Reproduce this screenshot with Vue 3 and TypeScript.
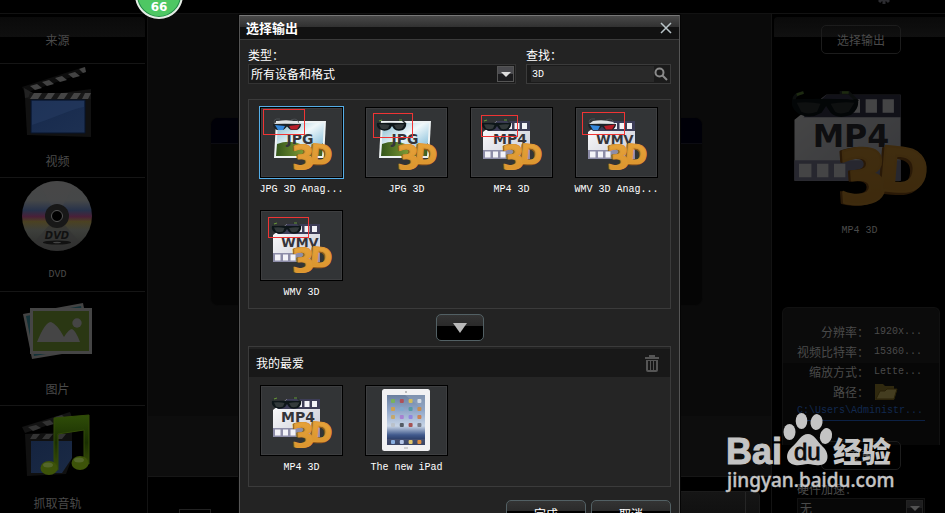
<script setup lang="ts">
import { ref } from 'vue'

type Art = 'film' | 'photo' | 'ipad'
interface Format {
  name: string
  art: Art
  text?: string
  glasses?: 'dark' | 'red'
  mark?: [number, number, number, number]
}

const sources = [
  { id: 'video', name: '视频' },
  { id: 'dvd', name: 'DVD' },
  { id: 'photos', name: '图片' },
  { id: 'audio', name: '抓取音轨' },
]

const formats: Format[] = [
  { name: 'JPG 3D Anag...', art: 'photo', text: 'JPG', glasses: 'red', mark: [3, 2, 42, 25] },
  { name: 'JPG 3D', art: 'photo', text: 'JPG', glasses: 'dark', mark: [8, 6, 40, 24] },
  { name: 'MP4 3D', art: 'film', text: 'MP4', glasses: 'dark', mark: [11, 8, 37, 21] },
  { name: 'WMV 3D Anag...', art: 'film', text: 'WMV', glasses: 'red', mark: [7, 5, 43, 22] },
  { name: 'WMV 3D', art: 'film', text: 'WMV', glasses: 'dark', mark: [8, 7, 41, 20] },
]
const favorites: Format[] = [
  { name: 'MP4 3D', art: 'film', text: 'MP4', glasses: 'dark' },
  { name: 'The new iPad', art: 'ipad' },
]

const details = [
  { label: '分辨率：', value: '1920x...' },
  { label: '视频比特率：', value: '15360...' },
  { label: '缩放方式：', value: 'Lette...' },
]

const selected = ref(0)
const query = ref('3D')
const category = ref('all')
const appColors = ['#79b84d', '#b7474a', '#e0c44c', '#dfe4ea', '#d8a03e', '#7fa9cf', '#4b9aa0', '#cf8a3e', '#c9a55a', '#a678d0', '#8d7de0', '#d0793f', '#b9bec6', '#41464e', '#a03c3a', '#6b6f7a']
</script>

<template>
  <div class="app">
    <svg class="defs" width="0" height="0" aria-hidden="true">
      <defs>
        <linearGradient id="sky" x1="0" y1="0" x2="1" y2="1">
          <stop offset="0" stop-color="#7db5cc" /><stop offset=".45" stop-color="#f0f8fa" /><stop offset="1" stop-color="#5fa9cf" />
        </linearGradient>
        <linearGradient id="grass" x1="0" y1="0" x2="1" y2="0">
          <stop offset="0" stop-color="#34561b" /><stop offset=".6" stop-color="#7f9c36" /><stop offset="1" stop-color="#3a5a22" />
        </linearGradient>
        <linearGradient id="paper" x1="0" y1="0" x2="1" y2="1">
          <stop offset="0" stop-color="#fff" /><stop offset="1" stop-color="#c6c8d4" />
        </linearGradient>
        <linearGradient id="gold" x1="0" y1="0" x2="0" y2="1">
          <stop offset="0" stop-color="#e8a53c" /><stop offset="1" stop-color="#d9922b" />
        </linearGradient>
        <linearGradient id="screen" x1="0" y1="0" x2="0" y2="1">
          <stop offset="0" stop-color="#6a7f9e" /><stop offset=".3" stop-color="#8fa5c8" /><stop offset=".62" stop-color="#c7d4e6" /><stop offset=".8" stop-color="#40598c" /><stop offset="1" stop-color="#151d3c" />
        </linearGradient>
        <linearGradient id="blue" x1="0" y1="0" x2="1" y2="1">
          <stop offset="0" stop-color="#16294c" /><stop offset="1" stop-color="#1d3052" />
        </linearGradient>
        <linearGradient id="disc" x1="0" y1="0" x2="0" y2="1">
          <stop offset="0" stop-color="#474747" /><stop offset=".28" stop-color="#454748" /><stop offset=".42" stop-color="#27324a" /><stop offset=".51" stop-color="#4a2038" /><stop offset=".58" stop-color="#4b4222" /><stop offset=".7" stop-color="#3d3f3b" /><stop offset="1" stop-color="#2b2b2b" />
        </linearGradient>
        <linearGradient id="note" x1="0" y1="0" x2="0" y2="1">
          <stop offset="0" stop-color="#2f4d08" /><stop offset=".5" stop-color="#1a2f02" /><stop offset="1" stop-color="#3d5208" />
        </linearGradient>
      </defs>

      <symbol id="film" viewBox="0 0 83 71">
        <path d="M27 14H60V52H13V25Z" fill="url(#paper)" />
        <path d="M27 14H60V24H17Z" fill="#3d3d57" />
        <path d="M13 43H60V52H13Z" fill="#8d8da8" />
        <g fill="#f3f3f8">
          <path d="M37 16h5v6h-5zM44.500 16h5v6h-5zM52 16h5v6h-5z" />
          <path d="M15 44.500h5.500v6H15zM23 44.500h5v6h-5zM30.500 44.500h5v6h-5z" />
        </g>
      </symbol>
      <symbol id="photo" viewBox="0 0 83 71">
        <path d="M16 14H66L64 51H14Z" fill="#eef3f4" />
        <path d="M18 16H64L62 49H16Z" fill="url(#sky)" />
        <path d="M17 37Q30 32 43 38T63 36L62 49H16Z" fill="url(#grass)" />
      </symbol>
      <symbol id="three-d" viewBox="0 0 83 71">
        <g font-family="DejaVu Sans" font-weight="700" stroke-linejoin="round">
          <g fill="#94591a" stroke="#94591a" stroke-width="1">
            <text x="31" y="62" font-size="33" transform="rotate(-4 42 50)">3</text>
            <text x="49" y="58" font-size="27" transform="rotate(5 60 47)">D</text>
          </g>
          <g fill="url(#gold)" stroke="#dd9a35" stroke-width="1">
            <text x="32" y="62" font-size="33" transform="rotate(-4 42 50)">3</text>
            <text x="50" y="57" font-size="27" transform="rotate(5 60 47)">D</text>
          </g>
        </g>
      </symbol>
      <symbol id="glasses-dark" viewBox="0 0 83 71">
        <path d="M13 17Q12 14 17 13M41 17L37 13H33" fill="none" stroke="#2a3330" stroke-width="1.400" />
        <path d="M14 14L17 13M34 13H37" stroke="#69963a" stroke-width="1.200" />
        <path d="M12 16Q22 15.500 41 16Q42 20 38 23Q32 25 29 22L27 19L25 22Q20 25 15 22.500Q11 20 12 16Z" fill="#0d1619" />
        <path d="M14 17.500Q20 17 24.500 18L23 21.500Q19 23 16 21.500ZM29 18Q34 17 39.500 17.500L37 21.500Q33 23 31 21.500Z" fill="#333a3b" />
      </symbol>
      <symbol id="glasses-red" viewBox="0 0 83 71">
        <path d="M15 17Q12 11 20 12M31 13Q38 10 39 17" fill="none" stroke="#4b4f52" />
        <path d="M18 14Q28 12 38 15L40 17H14Z" fill="#dfe3e4" />
        <path d="M13 17Q22 16.500 41 17Q41 21 37 23H31Q29 22 27 19.500Q25 22 23 23H17Q13 21 13 17Z" fill="#1b2328" />
        <path d="M15 18L25 19L23 23H18Z" fill="#3488dc" />
        <path d="M29 19L40 17.500L37 22.500H31Z" fill="#b81d27" />
      </symbol>
    </svg>

    <header class="topbar">
      <span class="counter">66</span>
      <svg class="gear" viewBox="0 0 14 14" aria-hidden="true">
        <circle cx="7" cy="7" r="4.500" /><path d="M5.500 0h3v14h-3zM0 5.500h14v3H0z" /><path d="M5.500 0h3v14h-3z" transform="rotate(45 7 7)" /><path d="M5.500 0h3v14h-3z" transform="rotate(-45 7 7)" />
      </svg>
    </header>

    <div class="columns">
      <nav class="sources">
        <h2>来源</h2>
        <a v-for="s in sources" :key="s.id" href="#" class="source">
          <svg viewBox="0 0 71 76" aria-hidden="true">
            <g v-if="s.id === 'video'">
              <path d="M0 21L62 1L64 6L3 27Z" fill="#0d0d0d" />
              <path d="M8 20l7-2 5 4-7 2zM20 16l7-2 5 4-7 2zM33 12l7-2 5 4-7 2zM46 8l7-2 5 4-7 2zM57 3l6-2 1 5-3 1z" fill="#434343" />
              <path d="M2 22L11 27L8 32H3Z" fill="#222" />
              <path d="M3 32L69 23V71L5 69Z" fill="#111" />
              <path d="M8 27H69V33H6Z" fill="#171717" />
              <path d="M12 27h8l-4 6H8zM26 27h7l-4 6h-7zM39 27h7l-4 6h-7zM52 27h7l-4 6h-7zM63 27h6l-3 6h-6z" fill="#454545" />
              <path d="M9 34H63V67H9Z" fill="url(#blue)" stroke="#08142b" />
              <path d="M10 59Q25 54 40 48T62 41V35H10Z" fill="#253b60" opacity=".6" />
            </g>
            <g v-else-if="s.id === 'dvd'">
              <circle cx="35" cy="36" r="35" fill="url(#disc)" />
              <path d="M35 36L18 5.400A35 35 0 0 1 52 5.400Z" fill="#484848" opacity=".5" />
              <path d="M35 36L12 62.400A35 35 0 0 0 58 62.400Z" fill="#333" opacity=".6" />
              <circle cx="35" cy="36" r="12" fill="#181818" />
              <circle cx="35" cy="36" r="5.500" fill="#000" stroke="#555" />
              <text x="35" y="59" text-anchor="middle" font-family="DejaVu Sans" font-size="10" font-weight="700" font-style="italic" fill="#111">DVD</text>
              <ellipse cx="35" cy="62.500" rx="14" ry="2" fill="#111" /><ellipse cx="35" cy="62.500" rx="4" ry=".8" fill="#444" />
            </g>
            <g v-else-if="s.id === 'photos'">
              <path d="M1 20L61 9L70 55L10 65Z" fill="#434343" />
              <path d="M4 22L59 12L67 53L12 62Z" fill="#143238" />
              <path d="M8 14H70V60H8Z" fill="#454545" />
              <path d="M11 17H67V57H11Z" fill="#2a3713" />
              <path d="M15 48Q23 28 29 28Q35 30 42 43Q47 35 50 35Q54 37 58 48Z" fill="#454545" />
              <circle cx="55" cy="29" r="4.700" fill="#454545" />
            </g>
            <g v-else>
              <path d="M0 19L48 4L50 9L3 25Z" fill="#131313" />
              <path d="M6 19l8-2 5 3-8 3zM20 14l8-2 4 4-7 2zM33 9l7-2 4 4-7 2z" fill="#333" />
              <path d="M3 26L50 24V50L44 66L5 68Z" fill="#101010" />
              <path d="M11 26h7l-4 5H8zM24 26h7l-4 5h-7zM37 26h7l-4 5h-7z" fill="#333" />
              <path d="M9 33H50V50L40 65H9Z" fill="url(#blue)" opacity=".8" />
              <path d="M32 10L67 7V56H62V22L36 26V62H32Z" fill="url(#note)" stroke="#324b08" />
              <ellipse cx="27" cy="60" rx="8.500" ry="7" fill="#3d5309" /><ellipse cx="58" cy="55" rx="8.500" ry="7" fill="#3d5309" />
              <ellipse cx="26" cy="57" rx="5" ry="2.500" fill="#53662a" /><ellipse cx="57" cy="52" rx="5" ry="2.500" fill="#53662a" />
            </g>
          </svg>
          <span :class="{ latin: s.id === 'dvd' }">{{ s.name }}</span>
        </a>
      </nav>

      <main class="center">
        <div class="workspace"><div class="stage"><div class="stage-head"></div></div></div>
        <div class="timeline"><div class="mini"></div><div class="track"></div></div>
      </main>

      <aside class="output">
        <div class="output-head"><button type="button" class="ghost">选择输出</button></div>
        <figure class="preview">
          <svg viewBox="12 11 60 54" aria-hidden="true">
            <use href="#film" width="83" height="71" />
            <text x="38" y="37" text-anchor="middle" class="art-text">MP4</text>
            <use href="#glasses-dark" width="83" height="71" /><use href="#three-d" width="83" height="71" />
          </svg>
          <figcaption class="latin">MP4 3D</figcaption>
        </figure>
        <section class="details">
          <dl>
            <template v-for="d in details" :key="d.label"><dt>{{ d.label }}</dt><dd class="latin">{{ d.value }}</dd></template>
            <dt>路径：</dt>
            <dd><svg class="folder" viewBox="0 0 24 18" aria-hidden="true"><path d="M1 1H9L11 3H20V6L23 7L20 17H1Z" fill="#30290f" /><path d="M2 16L6 8H11L13 6H23L20 16Z" fill="#443d20" stroke="#282108" /></svg></dd>
          </dl>
          <a href="#" class="path latin">C:\Users\Administr...</a>
        </section>
        <button type="button" class="ghost change">变更</button>
        <div class="accel">
          <label for="accel">硬件加速：</label>
          <div class="select dim"><select id="accel"><option>无</option></select><i class="drop"></i></div>
        </div>
      </aside>
    </div>

    <div class="dialog" role="dialog" aria-labelledby="dialog-title">
      <div class="titlebar">
        <h1 id="dialog-title">选择输出</h1>
        <button type="button" class="close" aria-label="关闭"><svg viewBox="0 0 12 12"><path d="M1 1L11 11M11 1L1 11" /></svg></button>
      </div>
      <div class="content">
        <div class="filters">
          <div class="field type">
            <label for="type">类型：</label>
            <div class="select"><select id="type" v-model="category"><option value="all">所有设备和格式</option></select><i class="drop"></i></div>
          </div>
          <div class="field find">
            <label for="find">查找：</label>
            <div class="search">
              <input id="find" v-model="query" type="text" />
              <svg viewBox="0 0 14 14" aria-hidden="true"><circle cx="5.500" cy="5.500" r="4" /><path d="M8.500 8.500L13 13" /></svg>
            </div>
          </div>
        </div>

        <div class="formats">
          <button v-for="(f, i) in formats" :key="f.name" type="button" class="card" :class="{ selected: selected === i }" @click="selected = i">
            <span class="thumb">
              <svg viewBox="0 0 83 71" aria-hidden="true">
                <use :href="'#' + f.art" width="83" height="71" />
                <text x="40" y="37" text-anchor="middle" class="art-text" :class="{ wide: f.text === 'WMV' }">{{ f.text }}</text>
                <use :href="'#glasses-' + f.glasses" width="83" height="71" /><use href="#three-d" width="83" height="71" />
                <rect v-if="f.mark" :x="f.mark[0] + 0.5" :y="f.mark[1] + 0.5" :width="f.mark[2] - 1" :height="f.mark[3]" fill="none" class="mark" />
              </svg>
            </span>
            <span class="name latin">{{ f.name }}</span>
          </button>
        </div>

        <button type="button" class="glossy add" aria-label="添加"><svg viewBox="0 0 14 10"><path d="M0 0H14L7 10Z" /></svg></button>

        <section class="favorites">
          <div class="fav-head">
            <h2>我的最爱</h2>
            <button type="button" class="trash" aria-label="删除"><svg viewBox="0 0 14 17"><path d="M4 0H10V2H14V4H0V2H4ZM1 5H13V15Q13 17 11 17H3Q1 17 1 15ZM3 6V15H5V6ZM6 6V15H8V6ZM9 6V15H11V6Z" fill-rule="evenodd" /></svg></button>
          </div>
          <div class="fav-list">
            <button v-for="f in favorites" :key="f.name" type="button" class="card">
              <span class="thumb">
                <svg viewBox="0 0 83 71" aria-hidden="true">
                  <g v-if="f.art === 'ipad'">
                    <rect x="17" y="4" width="48" height="62" rx="2.500" fill="#f1f1f3" />
                    <rect x="22" y="10" width="38" height="50" fill="url(#screen)" />
                    <path d="M40 10H60V26Z" fill="#93a6c0" opacity=".5" />
                    <rect v-for="(c, n) in appColors" :key="n" :x="26 + (n % 4) * 8.800" :y="14 + Math.floor(n / 4) * 8" width="4" height="4" rx="1" :fill="c" opacity=".85" />
                    <path d="M22 54H60V60H22Z" fill="#4b5675" opacity=".7" />
                    <rect v-for="n in 4" :key="'d' + n" :x="17.200 + n * 8.800" y="55" width="4" height="4" rx="1" :fill="['#88aee0', '#b5c6e6', '#e0c56c', '#dd8d3d'][n - 1]" />
                    <circle cx="41" cy="7" r=".8" fill="#777" /><path d="M39 63H43" stroke="#aaa" />
                  </g>
                  <template v-else>
                    <use href="#film" width="83" height="71" /><text x="38" y="37" text-anchor="middle" class="art-text">{{ f.text }}</text>
                    <use href="#glasses-dark" width="83" height="71" /><use href="#three-d" width="83" height="71" />
                  </template>
                </svg>
              </span>
              <span class="name latin">{{ f.name }}</span>
            </button>
          </div>
        </section>

        <div class="actions">
          <button type="button" class="glossy">完成</button>
          <button type="button" class="glossy">取消</button>
        </div>
      </div>
    </div>

    <svg class="brand" viewBox="0 0 180 100" role="img" aria-label="Baidu 经验">
      <g fill="#c4c4c4">
        <text x="6" y="59" font-family="Liberation Sans" font-weight="700" font-size="36" stroke="#c4c4c4" stroke-width="1">Bai</text>
        <ellipse cx="69.500" cy="27" rx="6" ry="8" /><ellipse cx="81.500" cy="16" rx="5.800" ry="8" /><ellipse cx="96.500" cy="17" rx="6" ry="8" transform="rotate(8 96 17)" /><ellipse cx="106" cy="31" rx="6" ry="8" transform="rotate(14 106 31)" />
        <path d="M88 29C94 29 97 36 103 42C109 47 110 59 100 60C95 61 93 59 88 59C83 59 80 61 75 60C65 58 65 48 72 42C79 36 81 29 88 29Z" />
        <text x="113" y="58" font-family="Noto Sans CJK SC" font-weight="900" font-size="29">经验</text>
        <text x="7" y="82" font-family="Noto Sans" font-size="19" font-weight="500" stroke="#c4c4c4" stroke-width=".4">jingyan.baidu.com</text>
      </g>
      <text x="74" y="55" font-family="Liberation Sans" font-size="24" fill="#0a0a0a" stroke="#0a0a0a" stroke-width=".8">du</text>
    </svg>
  </div>
</template>

<style>
body { background: #000; overflow: hidden; }
</style>

<style scoped>
* { box-sizing: border-box; }
.app { position: relative; display: flex; flex-direction: column; height: 100vh; overflow: hidden; background: #000; color: #4a4a4a; font: 12px/18px "Noto Sans CJK SC", sans-serif; }
h1, h2, figure, dl, dd { margin: 0; font-weight: 400; font-size: 12px; }
button, input, select { font: inherit; color: inherit; margin: 0; padding: 0; border: 0; background: none; }
a { color: inherit; text-decoration: none; }
svg { display: block; flex: none; }
.defs { position: absolute; }
.latin { font-family: "Liberation Mono", monospace; font-size: 10px; white-space: nowrap; }
.art-text { font: 700 14px "DejaVu Sans", sans-serif; fill: #35353a; }
.art-text.wide { font-size: 13px; }

.topbar { flex: none; height: 14px; border-bottom: 1px solid #121212; }
.counter { position: absolute; left: 135px; top: -29px; width: 48px; height: 48px; padding-top: 26px; border: 2px solid #e5ebe5; border-radius: 50%; background: #4ec763; box-shadow: inset 0 0 0 1px #23884a; color: #fff; font: 700 12px/16px "DejaVu Sans", sans-serif; text-align: center; }
.gear { position: absolute; right: 54px; top: -10px; width: 14px; height: 14px; fill: #2c2c30; }
.columns { flex: 1; min-height: 0; display: grid; grid-template-columns: 147px 1fr 173px; }

.sources { min-height: 0; padding: 3px 2px 0 0; overflow: hidden; }
.sources h2 { height: 47px; padding: 14px 30px 0 0; border-bottom: 1px solid #151515; border-top-right-radius: 4px; background: linear-gradient(#0a0a0a, #0f0f0f) top / 100% 20px no-repeat; text-align: center; }
.source { display: flex; flex-direction: column; align-items: center; gap: 10px; height: 114px; padding: 2px 30px 0 0; border-bottom: 1px solid #151515; }
.source svg { width: 71px; height: 76px; }

.center { display: flex; flex-direction: column; min-height: 0; border: solid #131313; border-width: 0 1px; overflow: hidden; }
.workspace { flex: none; height: 463px; padding: 103px 68px 170px 62px; border-bottom: 1px solid #161616; background: linear-gradient(#0a0a0a 402px, #0d0d0d 402px); }
.stage { height: 189px; border: 1px solid #090909; border-radius: 8px; background: #050505; overflow: hidden; }
.stage-head { height: 26px; background: #000008; border-bottom: 1px solid #0c0c12; }
.timeline { display: flex; justify-content: space-between; padding: 14px 11px 0 31px; }
.mini { width: 32px; height: 20px; margin-top: 18px; border: 1px solid #222; }
.track { width: 110px; height: 40px; border: 1px solid #1b1b1b; border-top-right-radius: 5px; background: linear-gradient(90deg, transparent 94px, #252525 94px, #252525 95px, transparent 95px), linear-gradient(#151515, #0d0d0d); }

.output { display: flex; flex-direction: column; padding: 3px 0 0 2px; overflow: hidden; }
.output-head { flex: none; height: 46px; padding: 8px 0 0 47px; border-top-left-radius: 4px; background: linear-gradient(#0a0a0a, #101010) top / 100% 20px no-repeat; }
.ghost { width: 80px; height: 29px; border: 1px solid #1c1c1c; border-radius: 5px; }
.preview { flex: none; display: flex; flex-direction: column; align-items: center; height: 244px; padding: 25px 0 0; }
.preview svg { width: 136px; height: 122px; opacity: .28; }
.preview figcaption { margin-top: 12px; }
.details { flex: none; height: 138px; margin: 0 5px 0 8px; padding: 14px 6px 0 14px; border: 1px solid #111; border-bottom: 0; border-radius: 6px 6px 0 0; background: linear-gradient(#0b0b0b 40%, #070707 40%); }
.details dl { display: grid; grid-template-columns: 72px 1fr; column-gap: 5px; line-height: 20px; }
.details dt { text-align: right; white-space: nowrap; }
.folder { width: 24px; height: 18px; margin-top: 1px; }
.path { display: block; width: 128px; border-bottom: 1px solid #0c2145; color: #12294f; line-height: 18px; }
.change { flex: none; margin: -4px 0 0 47px; }
.accel { margin: 10px 20px 0 23px; }
.accel label { display: block; }
.select { position: relative; display: flex; height: 20px; border: 1px solid #333; background: #1a1a1a; }
.select select { appearance: none; flex: 1; min-width: 0; padding: 0 22px 0 2px; outline: 0; line-height: 18px; }
.select .drop { position: absolute; right: 1px; top: 1px; width: 17px; height: 16px; border: 1px solid #555; background: linear-gradient(#4a4a4e 50%, #1c1c1e 50%); pointer-events: none; }
.select .drop::after { content: ""; display: block; margin: 5px auto 0; width: 0; height: 0; border: solid transparent; border-width: 5px 5px 0; border-top-color: #ddd; }
.select.dim { border-color: #121212; background: #070707; }
.select.dim .drop { opacity: .35; }

.dialog { position: absolute; left: 239px; top: 15px; width: 441px; border: 1px solid #555; border-top-color: #777; background: #232323; box-shadow: 0 0 0 1px #050505; color: #fff; }
.titlebar { display: flex; align-items: center; justify-content: space-between; height: 24px; padding: 0 7px 0 6px; border-bottom: 1px solid #3b3b3b; background: linear-gradient(#484848, #303030 11px, #111 11px, #111); }
.titlebar h1 { font-size: 13px; font-weight: 700; }
.close svg { width: 12px; height: 12px; fill: none; stroke: #b9c4c8; stroke-width: 1.500; }
.content { padding: 6px 8px 8px; }
.filters { display: flex; gap: 10px; }
.field label { display: block; }
.type { flex: 1; }
.find { width: 145px; }
.search { display: flex; align-items: center; height: 20px; padding: 0 2px 0 4px; border: 1px solid #3b3b3b; background: #1b1b1b; }
.search input { flex: 1; min-width: 0; height: 16px; padding: 0 1px; outline: 0; background: #292929; font: 10px "Liberation Mono", monospace; }
.search svg { width: 14px; height: 14px; fill: none; stroke: #8a8a8a; stroke-width: 2; }
.formats { display: grid; grid-template-columns: repeat(auto-fill, 105px); align-content: start; height: 210px; margin-top: 15px; padding-top: 7px; border: 1px solid #3b3b3b; background: #252525; }
.card { display: flex; flex-direction: column; align-items: center; height: 103px; line-height: 14px; }
.thumb { display: block; width: 83px; height: 71px; background: #323436; box-shadow: inset 0 0 0 1px #000, inset 0 0 0 2px #3d3e40; }
.selected .thumb { box-shadow: 0 0 0 1px #55aee8, inset 0 0 0 1px #000, inset 0 0 0 2px #3d3e40; }
.thumb svg { width: 83px; height: 71px; overflow: visible; }
.mark { stroke: #f03434; }
.name { margin-top: 4px; line-height: 16px; }
.glossy { border: 1px solid #526064; border-radius: 5px; background: linear-gradient(#343434, #2a2a2a 42%, #000 42%); }
.add { display: flex; align-items: center; justify-content: center; width: 48px; height: 27px; margin: 5px auto; }
.add svg { width: 14px; height: 10px; fill: #b9b9b9; }
.favorites { height: 141px; border: 1px solid #3b3b3b; background: #252525; }
.fav-head { display: flex; align-items: center; justify-content: space-between; height: 30px; padding: 0 11px 0 7px; border-top: 2px solid #222; background: #181818; }
.trash svg { width: 14px; height: 17px; fill: #555; }
.fav-list { display: grid; grid-template-columns: repeat(auto-fill, 105px); padding-top: 8px; }
.actions { display: flex; justify-content: flex-end; gap: 5px; margin-top: 13px; }
.actions .glossy { width: 80px; height: 27px; }
.brand { position: absolute; right: 45px; bottom: 8px; width: 180px; height: 100px; pointer-events: none; }
</style>
